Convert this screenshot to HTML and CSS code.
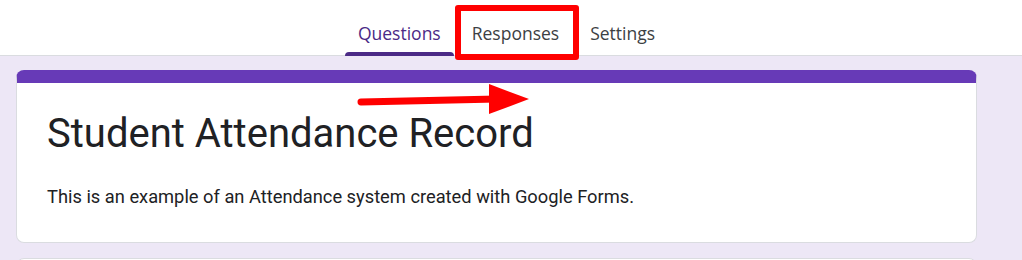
FILE: index.html
```html
<!DOCTYPE html>
<html lang="en">
<head>
    <meta charset="UTF-8">
    <meta name="viewport" content="width=device-width, initial-scale=1.0">
    <title>Student Attendance Record</title>
    <link rel="stylesheet" href="styles.css">
</head>
<body>
    <header class="topbar">
        <nav class="tabs">
            <a class="tab active">Questions</a>
            <a class="tab">Responses</a>
            <a class="tab">Settings</a>
        </nav>
        <div class="highlight"></div>
    </header>

    <main class="page">
        <section class="card title-card">
            <div class="card-body">
                <h1>Student Attendance Record</h1>
                <p>This is an example of an Attendance system created with Google Forms.</p>
            </div>
            <svg class="arrow" width="180" height="40" viewBox="0 0 180 40">
                <line x1="4" y1="20" x2="140" y2="17" stroke="#ff0000" stroke-width="7" stroke-linecap="round"/>
                <polygon points="132,2 172,17 132,32" fill="#ff0000"/>
            </svg>
        </section>
        <section class="card next-card"></section>
    </main>
</body>
</html>
```

FILE: styles.css
```css
body {
    margin: 0;
    font-family: Roboto, Arial, sans-serif;
    background-color: #ede7f6;
    overflow: hidden;
}
.topbar {
    position: relative;
    height: 56px;
    background: white;
    border-bottom: 1px solid #dadce0;
    box-sizing: border-box;
}
.tabs {
    display: flex;
    justify-content: center;
    gap: 5px;
    height: 100%;
    padding-right: 9px;
}
.tab {
    display: flex;
    align-items: center;
    padding: 10px 13px 0 13px;
    font-family: "Open Sans", Roboto, sans-serif;
    font-size: 17.5px;
    font-weight: 500;
    color: #3c4043;
    position: relative;
}
.tab.active {
    color: #4b2a86;
}
.tab.active::after {
    content: "";
    position: absolute;
    left: 0;
    right: 0;
    bottom: -1px;
    height: 4px;
    background: #4b2a86;
    border-radius: 4px 4px 0 0;
}
.highlight {
    position: absolute;
    left: 455px;
    top: 5px;
    width: 112px;
    height: 43px;
    border: 6px solid #ff0000;
    border-radius: 3px;
}
.page {
    padding: 14px 45px 0 16px;
}
.card {
    position: relative;
    background: white;
    border: 1px solid #dadce0;
    border-radius: 8px;
}
.title-card {
    border-top: 13px solid #673ab7;
}
.card-body {
    padding: 25px 30px 32px 30px;
}
h1 {
    margin: 0;
    font-size: 40px;
    font-weight: 400;
    color: #202124;
    line-height: 52px;
}
p {
    margin: 24px 0 0 0;
    font-size: 18.3px;
    color: #202124;
    line-height: 26px;
}
.arrow {
    position: absolute;
    left: 340px;
    top: -1px;
}
.next-card {
    margin-top: 15px;
    height: 40px;
}
```
